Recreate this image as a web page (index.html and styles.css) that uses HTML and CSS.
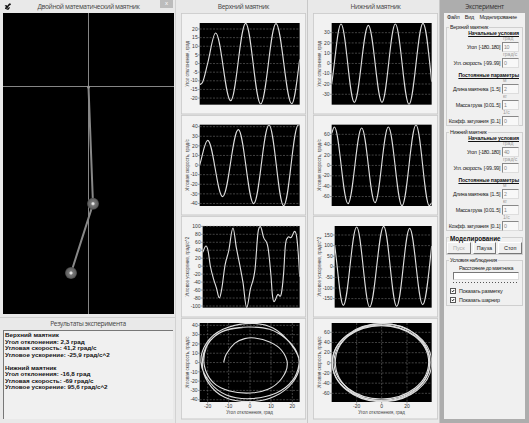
FILE: index.html
```html
<!DOCTYPE html>
<html lang="ru">
<head>
  <meta charset="UTF-8">
  <title>Двойной математический маятник</title>
  <link rel="stylesheet" href="styles.css">
</head>
<body>
  <div class="app">
    <div class="left">
      <div class="window">
        <div class="titlebar">
          <svg class="app-icon" viewBox="0 0 18 18"><path d="M1 7h5l2 3 4-6 4-1M6 7l-3 7 6 2 4-5M9 10l-3 2" fill="none" stroke="#111" stroke-width="3"/><circle cx="13" cy="4" r="2.4" fill="#111"/></svg>
          <span class="main-title">Двойной математический маятник</span>
          <span class="close">x</span>
        </div>
        <svg class="scene" viewBox="3 13 171 301">
          <defs>
            <radialGradient id="ball">
              <stop offset="0" stop-color="#fff"/>
              <stop offset="0.2" stop-color="#ccc"/>
              <stop offset="0.35" stop-color="#777"/>
              <stop offset="0.8" stop-color="#606060"/>
              <stop offset="1" stop-color="#3c3c3c"/>
            </radialGradient>
          </defs>
          <rect x="3" y="13" width="171" height="301" fill="#000"/>
          <path d="M88.5 13V314M3 86.5H174" stroke="#858585" stroke-width="1"/>
          <path d="M88.5 87L93 204L71 273" fill="none" stroke="#888" stroke-width="2"/>
          <circle cx="88.5" cy="87" r="1.5" fill="#999"/>
          <circle cx="93" cy="203.7" r="6" fill="url(#ball)"/>
          <circle cx="71" cy="273" r="6" fill="url(#ball)"/>
        </svg>
      </div>
      <div class="window results">
        <div class="results-title">Результаты эксперимента</div>
        <div class="memo">Верхний маятник
Угол отклонения: 2,3 град
Угловая скорость: 41,2 град/с
Угловое ускорение: -25,9 град/с^2

Нижний маятник
Угол отклонения: -16,8 град
Угловая скорость: -69 град/с
Угловое ускорение: 95,6 град/с^2</div>
      </div>
    </div>

    <div class="charts" id="upper">
      <div class="chart-title">Верхний маятник</div>
    </div>
    <div class="charts" id="lower">
      <div class="chart-title">Нижний маятник</div>
    </div>

    <div class="experiment">
      <div class="exp-title">Эксперимент</div>
      <div class="client">
        <div class="menu"><span>Файл</span><span>Вид</span><span>Моделирование</span></div>

        <div class="group params">
          <div class="legend">Верхний маятник</div>
          <div class="heading">Начальные условия</div>
          <div class="unit">град</div>
          <div class="row"><span>Угол&nbsp; [-180..180]</span><b class="field">10</b></div>
          <div class="unit">град/с</div>
          <div class="row"><span>Угл. скорость&nbsp; [-99..99]</span><b class="field">0</b></div>
          <div class="heading second">Постоянные параметры</div>
          <div class="unit">м</div>
          <div class="row"><span>Длина маятника&nbsp; [1..5]</span><b class="field">2</b></div>
          <div class="unit">кг</div>
          <div class="row"><span>Масса груза&nbsp; [0.01..5]</span><b class="field">1</b></div>
          <div class="unit">1/с</div>
          <div class="row"><span>Коэфф. затухания&nbsp; [0..1]</span><b class="field">0</b></div>
        </div>

        <div class="group params">
          <div class="legend">Нижний маятник</div>
          <div class="heading">Начальные условия</div>
          <div class="unit">град</div>
          <div class="row"><span>Угол&nbsp; [-180..180]</span><b class="field">40</b></div>
          <div class="unit">град/с</div>
          <div class="row"><span>Угл. скорость&nbsp; [-99..99]</span><b class="field">0</b></div>
          <div class="heading second">Постоянные параметры</div>
          <div class="unit">м</div>
          <div class="row"><span>Длина маятника&nbsp; [1..5]</span><b class="field">2</b></div>
          <div class="unit">кг</div>
          <div class="row"><span>Масса груза&nbsp; [0.01..5]</span><b class="field">1</b></div>
          <div class="unit">1/с</div>
          <div class="row"><span>Коэфф. затухания&nbsp; [0..1]</span><b class="field">0</b></div>
        </div>

        <div class="group control">
          <div class="legend strong">Моделирование</div>
          <div class="buttons">
            <span class="btn disabled">Пуск</span><span class="btn">Пауза</span><span class="btn">Стоп</span>
          </div>
        </div>

        <div class="group view">
          <div class="legend">Условия наблюдения</div>
          <div class="distance">Расстояние до маятника</div>
          <div class="track"></div>
          <div class="ticks"></div>
          <div class="check"><svg viewBox="0 0 6 6"><path d="M1.2 2.8L2.5 4.3L4.8 1.5" /></svg>Показать разметку</div>
          <div class="check"><svg viewBox="0 0 6 6"><path d="M1.2 2.8L2.5 4.3L4.8 1.5" /></svg>Показать шарнир</div>
        </div>
      </div>
    </div>
  </div>
  <script src="charts.js"></script>
</body>
</html>
```
FILE: styles.css
```css
body {
  margin: 0;
  font-family: "Liberation Sans", Arial, sans-serif;
  font-size: 5.8px;
  color: #222;
  background: #e9e9e9;
  overflow: hidden;
}
.app {
  display: grid;
  grid-template-columns: 176px 132px 132px 89px;
  height: 423px;
}
svg {
  display: block;
}

/* left side */
.left {
  border-right: 1px solid #d2d2d2;
  box-sizing: border-box;
}
.window {
  padding: 0 2px 0 3px;
}
.titlebar {
  display: flex;
  height: 13px;
  align-items: center;
  justify-content: space-between;
}
.app-icon {
  width: 8px;
  height: 7px;
  margin-left: 1px;
}
.main-title, .results-title, .chart-title, .exp-title {
  font-family: "Open Sans", sans-serif;
  font-size: 6.6px;
  letter-spacing: -0.36px;
  color: #444;
  white-space: nowrap;
}
.main-title {
  margin-left: 5px;
}
.close {
  width: 13px;
  height: 8px;
  margin-bottom: 5px;
  background: #bcbcbc;
  color: #fff;
  font-size: 6px;
  line-height: 7px;
  text-align: center;
}
.scene {
  width: 171px;
  height: 301px;
}
.results {
  margin-top: 3px;
  border-top: 1px solid #d0d0d0;
}
.results-title {
  height: 12px;
  line-height: 12px;
  text-align: center;
}
.memo {
  height: 89px;
  padding: 1px;
  box-sizing: border-box;
  border-top: 1px solid #777;
  border-left: 1px solid #777;
  background: #f0f0f0;
  font-size: 6.25px;
  font-weight: bold;
  line-height: 6.55px;
  color: #111;
  white-space: pre;
}

/* charts */
.charts {
  display: grid;
  grid-template-rows: 13px 102px 101px 102px 102px;
  padding: 0 2px 0 5px;
  border-right: 1px solid #c8c8c8;
}
.chart-title {
  line-height: 13px;
  text-align: center;
}
.chart {
  width: 125px;
  height: 100%;
}
.panel {
  fill: #f2f2f2;
  stroke: #c9c9c9;
  stroke-width: 3;
}
.plot {
  fill: #000;
}
.grid {
  stroke: #606060;
  stroke-width: 2;
  stroke-dasharray: 6 4;
}
.mark {
  stroke: #777;
  stroke-width: 2;
}
.curve {
  fill: none;
  stroke: #dedede;
  stroke-width: 3.4;
  stroke-linejoin: round;
}
.chart text {
  font-size: 15px;
  fill: #333;
}
.chart .axis {
  font-size: 15px;
  fill: #444;
}

/* experiment window */
.experiment {
  padding: 0 4px 3px;
  background: #adadad;
}
.exp-title {
  height: 13px;
  line-height: 13px;
  text-align: center;
  color: #333;
}
.client {
  height: 406px;
  padding: 0 2px;
  background: #f0f0f0;
}
.menu {
  display: flex;
  gap: 5.5px;
  height: 14px;
  padding-left: 1px;
  font-size: 5.5px;
  letter-spacing: -0.3px;
  line-height: 8px;
}
.group {
  position: relative;
  border: 1px solid #cfcfcf;
  box-sizing: border-box;
}
.legend {
  position: absolute;
  left: 2px;
  top: -4px;
  padding: 0 1px;
  background: #f0f0f0;
  font-size: 5.3px;
  letter-spacing: -0.3px;
  line-height: 7px;
  white-space: nowrap;
}
.params {
  height: 99px;
  padding: 2px 3px 0 0;
  margin-bottom: 6px;
}
.heading {
  height: 6px;
  font-size: 5.2px;
  letter-spacing: -0.08px;
  font-weight: bold;
  line-height: 6px;
  text-align: right;
  text-decoration: underline;
  white-space: nowrap;
  color: #111;
}
.second {
  margin-top: 4px;
}
.unit {
  height: 6px;
  width: 16px;
  margin-left: auto;
  font-size: 5px;
  line-height: 5px;
  color: #999;
}
.row {
  display: flex;
  height: 10px;
  align-items: center;
  justify-content: flex-end;
  gap: 2px;
  font-size: 5.3px;
  letter-spacing: -0.36px;
  white-space: nowrap;
}
.field {
  flex: none;
  width: 14px;
  height: 8px;
  padding-left: 1px;
  border: 1px solid #ddd;
  border-top-color: #888;
  border-left-color: #888;
  background: #f8f8f8;
  font-weight: normal;
  line-height: 8px;
  color: #888;
}
.control {
  height: 18px;
  padding-top: 1px;
}
.legend.strong {
  top: -3px;
  font-size: 6.3px;
  letter-spacing: 0;
  font-weight: bold;
  color: #111;
}
.buttons {
  display: flex;
  gap: 2px;
}
.btn {
  flex: 1;
  margin-top: 3px;
  height: 10px;
  border: 1px solid #fff;
  border-right-color: #777;
  border-bottom-color: #777;
  font-size: 5.5px;
  line-height: 10px;
  text-align: center;
}
.disabled {
  color: #aaa;
}
.view {
  height: 46px;
  margin-top: 5px;
  padding: 3px 3px 0 6px;
}
.distance {
  line-height: 8px;
  font-size: 5.4px;
  letter-spacing: -0.35px;
  text-align: center;
  white-space: nowrap;
}
.track {
  height: 6px;
  border: 1px solid #ddd;
  border-top-color: #777;
  border-left-color: #777;
  background: #fff;
}
.ticks {
  height: 1px;
  margin: 2px 0 3px;
  background: repeating-linear-gradient(to right, #555 0 1px, transparent 1px 3px);
}
.check {
  display: flex;
  align-items: center;
  gap: 3px;
  height: 9px;
  margin-left: -3px;
  font-size: 5.4px;
  letter-spacing: -0.2px;
  white-space: nowrap;
}
.check svg {
  width: 4px;
  height: 4px;
  border: 1px solid #555;
  background: #fff;
}
.check path {
  fill: none;
  stroke: #111;
  stroke-width: 1.4;
}
```
FILE: charts.js
```javascript
// one viewBox unit is a third of a pixel
const ANGLE = 'Угол отклонения, град';
const SPEED = 'Угловая скорость, град/с';
const ACCEL = 'Угловое ускорение, град/с^2';

// y: [first label, label step, first position, position step, count]
const upper = [
  { top: 39, h: 102, plot: [70, 69, 300, 245], label: ANGLE, y: [20, -5, 87, 25.9, 9],
    points: [[70,254],[79,246],[94,190],[118,99],[163,302],[208,70],[253,312],[299,71],[346,311],[370,178]] },
  { top: 15, h: 101, plot: [70, 44, 300, 244], label: SPEED, y: [40, -10, 50, 28.8, 9],
    points: [[70,165],[94,91],[139,260],[186,59],[232,281],[278,45],[322,287],[366,45],[370,45]] },
  { top: 0, h: 102, plot: [79, 30, 291, 245], label: ACCEL, y: [100, -20, 31, 23.9, 11],
    points: [[79,109],[89,90],[95,103],[102,150],[112,190],[120,215],[129,246],[136,220],[146,148],[157,105],[170,36],[180,95],[190,145],[200,200],[211,275],[222,220],[236,160],[245,50],[252,32],[262,65],[275,95],[284,180],[288,235],[293,257],[304,236],[315,233],[322,170],[327,90],[334,65],[345,64],[355,46],[362,70],[370,182]] },
  { top: 12, h: 102, plot: [70, 27, 300, 237], label: SPEED, y: [40, -10, 34, 27.9, 9],
    xAxis: [[-20, 94], [-10, 157], [0, 221], [10, 284], [20, 348]],
    phase: [[142,145],[150,120],[175,88],[205,74],[235,72],[280,84],[315,108],[333,150],[315,195],[275,226],[222,237],[160,231],[110,205],[84,155],[90,100],[120,63],[165,44],[221,39],[280,46],[330,75],[360,112],[368,150],[348,200],[300,237],[222,254],[150,243],[100,204],[74,146],[90,88],[140,46],[220,28],[290,42],[345,92],[370,148],[350,204],[295,247],[221,263],[145,250],[95,205],[78,150],[94,90],[140,52],[200,40]] }
];
const lower = [
  { top: 39, h: 102, plot: [70, 69, 300, 245], label: ANGLE, y: [30, -10, 98, 30.8, 7],
    points: [[70,252],[98,72],[138,307],[180,76],[221,307],[261,72],[302,313],[344,70],[370,245]] },
  { top: 15, h: 101, plot: [70, 44, 300, 244], label: SPEED, y: [60, -20, 73, 31.1, 7],
    points: [[70,70],[78,51],[119,281],[160,54],[200,278],[240,51],[281,287],[323,45],[363,287],[370,278]] },
  { top: 0, h: 102, plot: [79, 30, 291, 245], label: ACCEL, y: [150, -50, 57, 31.8, 7],
    points: [[79,88],[105,268],[145,33],[184,273],[226,31],[265,271],[304,37],[343,266],[370,90]] },
  { top: 12, h: 102, plot: [70, 27, 300, 237], label: SPEED, y: [60, -20, 55, 30.5, 7],
    xAxis: [[-20, 145], [0, 220], [20, 296]],
    ellipses: [[219, 145, 142, 110], [221, 146, 149, 117], [218, 146, 146, 113], [223, 145, 142, 116]] }
];

// time curve, flat at every local extremum
function timePath(p) {
  const n = p.length;
  const s = i => (p[i + 1][1] - p[i][1]) / (p[i + 1][0] - p[i][0]);
  const m = p.map((_, i) => {
    if (i === 0) return s(0);
    if (i === n - 1) return s(n - 2) * 1.4;
    return s(i - 1) * s(i) <= 0 ? 0 : (s(i - 1) + s(i)) / 2;
  });
  let d = `M${p[0]}`;
  for (let i = 0; i < n - 1; i++) {
    const k = (p[i + 1][0] - p[i][0]) * 0.36;
    d += `C${p[i][0] + k} ${p[i][1] + m[i] * k} ${p[i + 1][0] - k} ${p[i + 1][1] - m[i + 1] * k} ${p[i + 1]}`;
  }
  return d;
}

function phasePath(p) {
  let d = `M${p[0]}`;
  for (let i = 0; i < p.length - 1; i++) {
    const a = p[i - 1] || p[i], b = p[i], c = p[i + 1], e = p[i + 2] || c;
    d += `C${b[0] + (c[0] - a[0]) / 6} ${b[1] + (c[1] - a[1]) / 6} ${c[0] - (e[0] - b[0]) / 6} ${c[1] - (e[1] - b[1]) / 6} ${c}`;
  }
  return d;
}

function drawChart(c, id) {
  const [x, y, w, h] = c.plot;
  const [first, step, pos, gap, count] = c.y;
  let out = `<clipPath id="${id}"><rect x="${x}" y="${y}" width="${w}" height="${h}"/></clipPath>
    <rect class="panel" x="15" y="${c.top + 1}" width="373" height="${c.h * 3 - 4}"/>
    <rect class="plot" x="${x}" y="${y}" width="${w}" height="${h}"/>`;
  for (let i = 0; i < count; i++) {
    const ty = pos + gap * i;
    out += `<path class="grid" d="M${x} ${ty}H${x + w}"/><path class="mark" d="M${x - 5} ${ty}H${x}"/>
      <text x="${x - 6}" y="${ty + 5}" text-anchor="end">${first + step * i}</text>`;
  }
  (c.xAxis || []).forEach(([value, tx]) => {
    out += `<path class="grid" d="M${tx} ${y}V${y + h}"/><path class="mark" d="M${tx} ${y + h}v5"/>
      <text x="${tx}" y="${y + h + 19}" text-anchor="middle">${value}</text>`;
  });
  if (c.xAxis) {
    out += `<text class="axis" x="150" y="${y + h + 37}" textLength="140" lengthAdjust="spacingAndGlyphs">${ANGLE}</text>`;
  }
  const len = c.label === ANGLE ? 138 : c.label === SPEED ? 156 : 180;
  out += `<text class="axis" transform="translate(38 ${y + h / 2 + len / 2}) rotate(-90)" textLength="${len}" lengthAdjust="spacingAndGlyphs">${c.label}</text>`;
  out += `<g clip-path="url(#${id})">`;
  if (c.points) out += `<path class="curve" d="${timePath(c.points)}"/>`;
  if (c.phase) out += `<path class="curve" d="${phasePath(c.phase)}"/>`;
  (c.ellipses || []).forEach(e => {
    out += `<ellipse class="curve" cx="${e[0]}" cy="${e[1]}" rx="${e[2]}" ry="${e[3]}"/>`;
  });
  return `<svg class="chart" viewBox="14 ${c.top} 375 ${c.h * 3}">${out}</g></svg>`;
}

function fill(id, list) {
  document.getElementById(id).insertAdjacentHTML('beforeend', list.map((c, i) => drawChart(c, id + i)).join(''));
}
fill('upper', upper);
fill('lower', lower);
```
